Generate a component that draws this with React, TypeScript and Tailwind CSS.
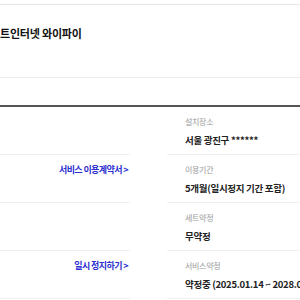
const rows = [
  { label: "설치장소", value: "서울 광진구 ******", link: "" },
  { label: "이용기간", value: "5개월(일시정지 기간 포함)", link: "서비스 이용계약서" },
  { label: "세트약정", value: "무약정", link: "" },
  { label: "서비스약정", value: "약정중 (2025.01.14 ~ 2028.01.13)", link: "일시 정지하기" },
];

export default function App() {
  return (
    <div
      className="h-[300px] w-[300px] overflow-hidden bg-white"
      style={{ fontFamily: '"Noto Sans CJK KR", "Noto Sans", sans-serif' }}
    >
      <div className="w-[460px]">
        <div className="h-[4px]" />
        <div className="flex h-[73px] items-center border-t border-[#e6e6e6] pb-[16px]">
          <h1 className="text-[11px] font-bold tracking-[-0.2px] text-[#111]">
            트인터넷 와이파이
          </h1>
        </div>
        <div className="h-[28px] border-t border-[#ececec]" />
        <div className="border-t-2 border-[#555]">
          {rows.map((row) => (
            <div key={row.label} className="flex h-[48px]">
              <div className="flex w-[130px] justify-end border-b border-[#f0f0f0] pr-[2px] pt-[8px]">
                {row.link && (
                  <span className="text-[9px] font-bold tracking-[-0.6px] text-[#2d2fd0]">
                    {row.link} &gt;
                  </span>
                )}
              </div>
              <div className="ml-[37px] flex-1 border-b border-[#f0f0f0] pl-[18px] pt-[9px]">
                <div className="text-[8px] leading-[12px] tracking-[-0.3px] text-[#999]">
                  {row.label}
                </div>
                <div className="mt-[5px] text-[9.5px] font-bold leading-[14px] tracking-[-0.3px] text-[#222]">
                  {row.value}
                </div>
              </div>
            </div>
          ))}
        </div>
      </div>
    </div>
  );
}
